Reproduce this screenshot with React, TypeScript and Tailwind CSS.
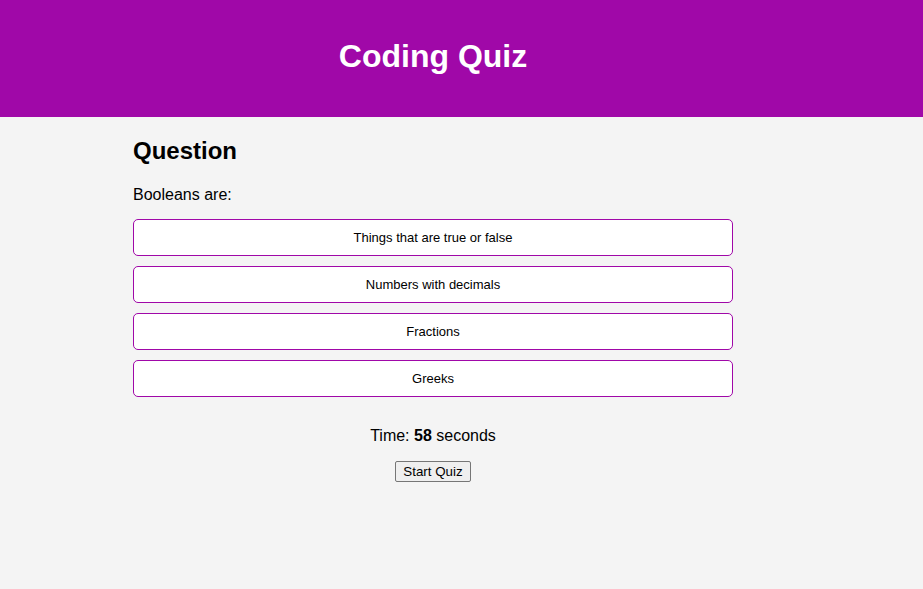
import React from 'react';

const choices = ['Things that are true or false', 'Numbers with decimals', 'Fractions', 'Greeks'];

export default function App() {
    return (
        <div className="min-h-[589px] bg-[#f4f4f4] text-black font-['Liberation_Sans',Arial,sans-serif]">
            {/* Header */}
            <header className="bg-[#a008a8] h-[117px] flex items-center pb-[4px]">
                <div className="ml-[133px] w-[600px] text-center">
                    <h1 className="text-[32px] leading-[37px] font-bold text-white">Coding Quiz</h1>
                </div>
            </header>

            {/* Quiz body */}
            <main className="ml-[133px] w-[600px] pt-[20px]">
                <h2 className="text-[24px] leading-[28px] font-bold">Question</h2>
                <p className="text-[16px] leading-[18px] mt-[21px]">Booleans are:</p>
                <div className="mt-[15px] flex flex-col gap-[10px]">
                    {choices.map((c) => (
                        <button
                            key={c}
                            className="h-[37px] w-full bg-white border border-[#a008a8] rounded-[5px] text-[13px] text-center"
                        >
                            {c}
                        </button>
                    ))}
                </div>
                <p className="text-center text-[16px] leading-[18px] mt-[30px]">
                    Time: <span className="font-bold">58</span> seconds
                </p>
                <div className="flex justify-center mt-[16px]">
                    <button className="h-[21px] px-[7px] text-[13.33px] leading-[15px] bg-[#efefef] border border-[#767676] rounded-[2px]">
                        Start Quiz
                    </button>
                </div>
            </main>
        </div>
    );
}
